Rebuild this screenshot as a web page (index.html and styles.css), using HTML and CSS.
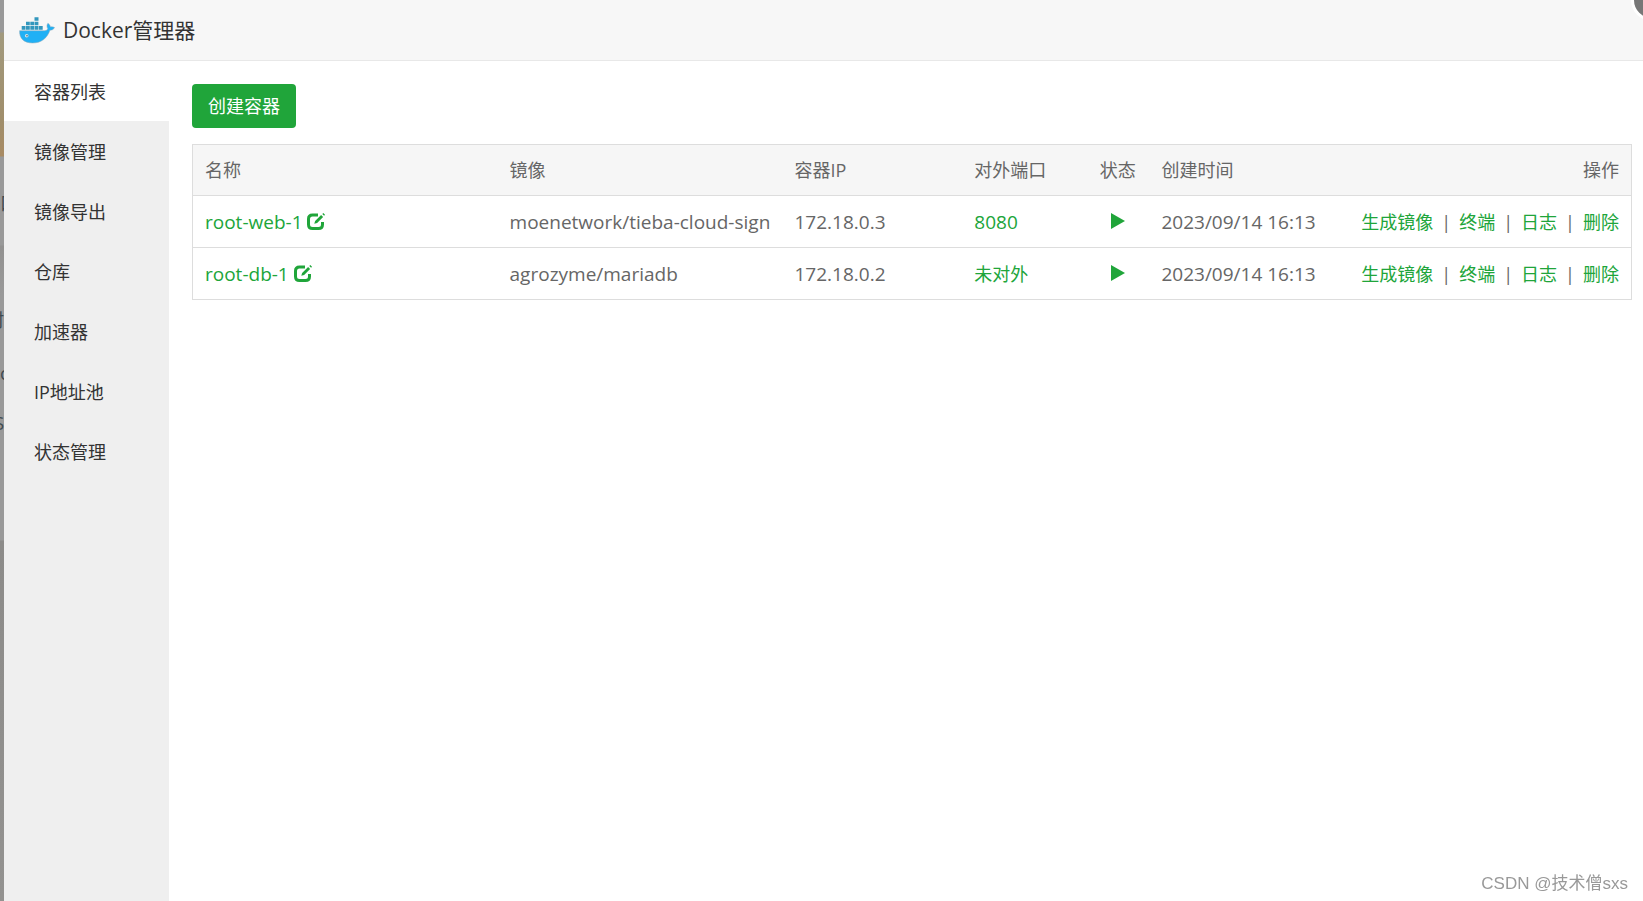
FILE: index.html
```html
<!DOCTYPE html>
<html lang="zh-CN">
<head>
<meta charset="utf-8">
<title>Docker管理器</title>
<link rel="stylesheet" href="styles.css">
</head>
<body>
<div class="backdrop" aria-hidden="true">
  <span class="behind behind-port">口</span>
  <span class="behind behind-item">村</span>
  <span class="behind behind-c">c</span>
  <span class="behind behind-s">S</span>
</div>
<div class="dialog">
  <header class="titlebar">
    <svg class="logo" viewBox="0 0 36 27" aria-hidden="true">
      <path fill="#20b0f5" stroke="#8aa9b8" stroke-width=".5" d="M.6 13.700h24.700c1.700 0 3-.7 3.500-1.900-1.200-1.900-1-4.200.1-5.500 1.500 1 2.300 2.200 2.500 3.600 1.500-.3 3-.1 4.200.7-.9 1.700-2.500 2.700-4.700 2.600C28.400 21 22.500 26 13.600 26 4.800 26 .2 21.200.6 13.700z"/>
      <g fill="#3397bd"><path d="M15.500.3h4v3.500h-4zM7 4.700h3.800v3.600H7zM11.300 4.700h3.800v3.600h-3.800zM15.600 4.700h3.800v3.600h-3.800zM2.700 9h3.800v3.700H2.700zM7 9h3.800v3.700H7zM11.300 9h3.800v3.700h-3.800zM15.600 9h3.800v3.700h-3.800zM19.900 9h3.800v3.700h-3.800z"/></g>
      <circle cx="7.700" cy="18.800" r="1.800" fill="#d5e4ea"/><circle cx="8" cy="18.800" r=".8" fill="#496b79"/>
    </svg>
    <h1 class="title">Docker管理器</h1>
    <button class="close" type="button" aria-label="关闭"></button>
  </header>
  <div class="body">
    <nav class="menu">
      <a class="menu-item active" href="#">容器列表</a>
      <a class="menu-item" href="#">镜像管理</a>
      <a class="menu-item" href="#">镜像导出</a>
      <a class="menu-item" href="#">仓库</a>
      <a class="menu-item" href="#">加速器</a>
      <a class="menu-item" href="#">IP地址池</a>
      <a class="menu-item" href="#">状态管理</a>
    </nav>
    <main class="content">
      <button class="create" type="button">创建容器</button>
      <table class="containers">
        <colgroup><col class="c-name"><col class="c-image"><col class="c-ip"><col class="c-port"><col class="c-state"><col class="c-time"><col class="c-ops"></colgroup>
        <thead>
          <tr><th>名称</th><th>镜像</th><th>容器IP</th><th>对外端口</th><th class="state">状态</th><th>创建时间</th><th class="ops">操作</th></tr>
        </thead>
        <tbody>
          <tr>
            <td class="latin"><a href="#">root-web-1 <svg class="edit" viewBox="0 0 18 17" aria-hidden="true"><path d="M11 2H5.500Q1.500 2 1.500 6v5.500q0 4 4 4h6q4 0 4-4V9" fill="none" stroke="currentColor" stroke-width="3"/><path d="M7.300 10.800l.8-2.900 6-6 2 2-6 6zM15.300.9l1-.9 1.700 1.700-.9 1z" fill="currentColor"/></svg></a></td>
            <td class="latin">moenetwork/tieba-cloud-sign</td>
            <td class="latin">172.18.0.3</td>
            <td class="latin"><a href="#">8080</a></td>
            <td class="state"><a href="#" aria-label="运行中"><svg class="play" viewBox="0 0 14 16" aria-hidden="true"><path d="M0 0l14 8-14 8z" fill="currentColor"/></svg></a></td>
            <td class="latin">2023/09/14 16:13</td>
            <td class="ops"><div class="actions"><a href="#">生成镜像</a><span>|</span><a href="#">终端</a><span>|</span><a href="#">日志</a><span>|</span><a href="#">删除</a></div></td>
          </tr>
          <tr>
            <td class="latin"><a href="#">root-db-1 <svg class="edit" viewBox="0 0 18 17" aria-hidden="true"><path d="M11 2H5.500Q1.500 2 1.500 6v5.500q0 4 4 4h6q4 0 4-4V9" fill="none" stroke="currentColor" stroke-width="3"/><path d="M7.300 10.800l.8-2.900 6-6 2 2-6 6zM15.300.9l1-.9 1.700 1.700-.9 1z" fill="currentColor"/></svg></a></td>
            <td class="latin">agrozyme/mariadb</td>
            <td class="latin">172.18.0.2</td>
            <td><a href="#">未对外</a></td>
            <td class="state"><a href="#" aria-label="运行中"><svg class="play" viewBox="0 0 14 16" aria-hidden="true"><path d="M0 0l14 8-14 8z" fill="currentColor"/></svg></a></td>
            <td class="latin">2023/09/14 16:13</td>
            <td class="ops"><div class="actions"><a href="#">生成镜像</a><span>|</span><a href="#">终端</a><span>|</span><a href="#">日志</a><span>|</span><a href="#">删除</a></div></td>
          </tr>
        </tbody>
      </table>
    </main>
  </div>
</div>
<div class="watermark">CSDN @技术僧sxs</div>
</body>
</html>
```

FILE: styles.css
```css
* { box-sizing: border-box; }
body {
  margin: 0;
  min-height: 100vh;
  display: flex;
  overflow: hidden;
  background: #fff;
  color: #333;
  font: 18px/24px "Open Sans", "Noto Sans CJK SC", sans-serif;
}
a { color: #20a53a; text-decoration: none; }
.backdrop {
  position: relative;
  flex: 0 0 4px;
  overflow: hidden;
  background: linear-gradient(#999 0, #999 32px, #a29a7e 33px, #a08e6b 120px, #a98b63 156px, #999 157px, #999 245px, #929190 246px, #999 295px, #999 540px, #8c8b89 541px, #939290 100%);
}
.behind { position: absolute; color: #3f4a50; line-height: 24px; }
.behind-port { left: 0; top: 191px; }
.behind-item { right: 0; top: 308px; }
.behind-c { left: 0; top: 361px; }
.behind-s { right: 0; top: 411px; }
.dialog { flex: 1; min-width: 0; display: flex; flex-direction: column; }
.titlebar {
  position: relative;
  display: flex;
  align-items: center;
  gap: 8px;
  height: 61px;
  padding: 0 15px;
  background: #f7f7f7;
  border-bottom: 1px solid #e8e8e8;
}
.logo { width: 36px; height: 27px; }
.title { margin: 0; font-size: 21px; line-height: 30px; font-weight: 400; }
.close {
  position: absolute;
  top: -21px;
  right: -30px;
  width: 42px;
  height: 42px;
  padding: 0;
  border: 3px solid #fff;
  border-radius: 50%;
  background: #777;
}
.body { flex: 1; display: flex; }
.menu { flex: 0 0 165px; background: #efefef; }
.menu-item { display: block; padding: 19px 30px 17px; color: #333; }
.active { background: #fff; }
.content { flex: 1; min-width: 0; padding: 23px 11px 23px 23px; }
.create {
  display: block;
  height: 44px;
  padding: 0 16px;
  border: 0;
  border-radius: 4px;
  background: #20a53a;
  color: #fff;
  font: inherit;
}
.containers {
  width: 100%;
  margin-top: 16px;
  table-layout: fixed;
  border-collapse: collapse;
  border: 1px solid #ddd;
  color: #666;
}
.containers th, .containers td {
  height: 52px;
  padding: 0 12px;
  border-bottom: 1px solid #ddd;
  text-align: left;
  font-weight: 400;
  white-space: nowrap;
}
.containers th { height: 51px; background: #f6f6f6; }
.containers .latin { font-size: 19px; }
.containers .state { text-align: center; }
.containers .ops { text-align: right; }
.c-name { width: 21.2%; }
.c-image { width: 19.8%; }
.c-ip { width: 12.5%; }
.c-port { width: 8.6%; }
.c-state { width: 4.4%; }
.c-time { width: 12.5%; }
.c-ops { width: 21%; }
.edit { width: 18px; height: 17px; vertical-align: -1px; }
.play { width: 14px; height: 16px; }
.actions { display: flex; justify-content: flex-end; gap: 8px; }
.watermark {
  position: fixed;
  right: 15px;
  bottom: 5px;
  color: #999;
  font-size: 17px;
  font-family: "Liberation Sans", "Noto Sans CJK SC", sans-serif;
}
```
